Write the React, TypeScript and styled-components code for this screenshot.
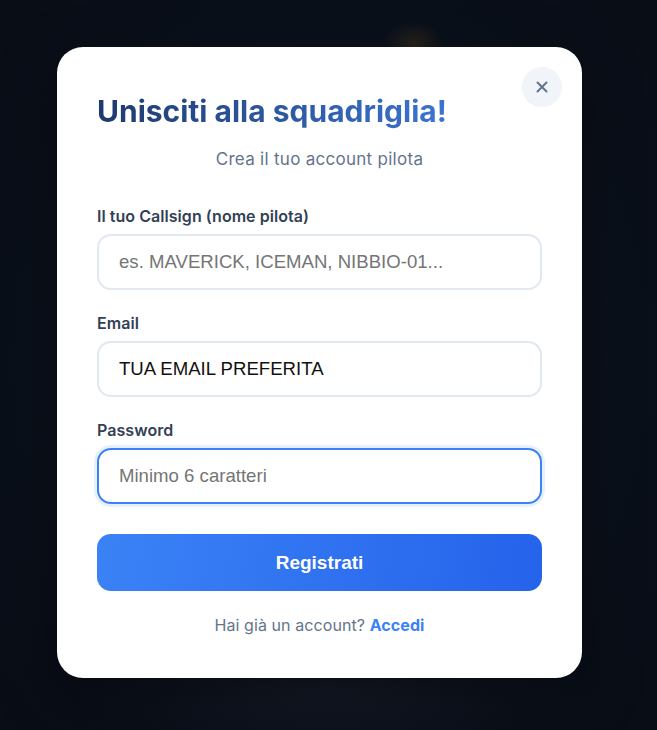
import React from "react";
import styled, { createGlobalStyle } from "styled-components";

const GlobalStyle = createGlobalStyle`
  html, body { margin: 0; padding: 0; }
  body {
    width: 657px;
    height: 730px;
    overflow: hidden;
    font-family: Inter, "Noto Sans", sans-serif;
    background:
      radial-gradient(ellipse 30px 22px at 414px 44px, rgba(140, 100, 30, 0.22), transparent 100%),
      radial-gradient(ellipse 260px 60px at 330px 690px, rgba(40, 48, 62, 0.3), transparent 100%),
      radial-gradient(ellipse 420px 500px at 330px 360px, #0f1623 0%, #0b111c 60%, #080d16 100%);
  }
`;

const Page = styled.div`
  display: flex;
  align-items: flex-start;
  padding: 47px 0 0 57px;
  box-sizing: border-box;
  height: 730px;
`;

const Modal = styled.div`
  position: relative;
  width: 525px;
  height: 631px;
  box-sizing: border-box;
  background: #ffffff;
  border-radius: 26px;
  padding: 46px 40px 40px;
  display: flex;
  flex-direction: column;
  box-shadow: 0 20px 60px rgba(0, 0, 0, 0.4);
`;

const CloseButton = styled.button`
  position: absolute;
  top: 20px;
  right: 20px;
  width: 40px;
  height: 40px;
  border-radius: 50%;
  border: none;
  background: #f1f5f9;
  color: #64748b;
  display: flex;
  align-items: center;
  justify-content: center;
  padding: 0;
  cursor: pointer;
`;

const Title = styled.h2`
  margin: 0;
  font-family: Inter, sans-serif;
  font-size: 30px;
  line-height: 36px;
  font-weight: 700;
  background: linear-gradient(90deg, #1e3a6e 0%, #3b74d0 100%);
  -webkit-background-clip: text;
  background-clip: text;
  color: transparent;
  align-self: flex-start;
`;

const Subtitle = styled.p`
  margin: 18px 0 0;
  text-align: center;
  font-size: 17px;
  line-height: 24px;
  letter-spacing: 0.28px;
  color: #64748b;
`;

const Form = styled.form`
  display: flex;
  flex-direction: column;
  margin-top: 35px;
`;

const Field = styled.div`
  display: flex;
  flex-direction: column;
  gap: 8px;
  margin-bottom: 23px;
`;

const Label = styled.label`
  font-size: 16px;
  line-height: 20px;
  font-weight: 600;
  letter-spacing: 0.05px;
  color: #334155;
`;

const Input = styled.input<{ $focused?: boolean }>`
  box-sizing: border-box;
  width: 100%;
  height: 56px;
  padding: 0 20px;
  border-radius: 14px;
  border: 2px solid ${(p) => (p.$focused ? "#3b82f6" : "#e2e8f0")};
  box-shadow: ${(p) => (p.$focused ? "0 0 0 3px rgba(59,130,246,0.12)" : "none")};
  font-family: "Liberation Sans", Arial, sans-serif;
  font-size: 18.6px;
  color: #111111;
  caret-color: #000000;
  outline: none;
  background: #ffffff;
  &::placeholder {
    color: #757575;
  }
`;

const SubmitButton = styled.button`
  margin-top: 7px;
  height: 57px;
  border: none;
  border-radius: 14px;
  background: linear-gradient(100deg, #3b82f6 0%, #2563eb 100%);
  color: #ffffff;
  font-family: "Liberation Sans", Arial, sans-serif;
  font-weight: 700;
  font-size: 19px;
  cursor: pointer;
`;

const Footer = styled.p`
  margin: 23px 0 0;
  text-align: center;
  font-size: 16px;
  line-height: 22px;
  letter-spacing: 0.08px;
  color: #64748b;
`;

const FooterLink = styled.a`
  color: #3b82f6;
  font-weight: 700;
  text-decoration: none;
`;

export default function App() {
  return (
    <>
      <GlobalStyle />
      <Page>
        <Modal>
          <CloseButton type="button" aria-label="Chiudi">
            <svg width="14" height="14" viewBox="0 0 14 14" fill="none">
              <path d="M2.5 2.5 L11.5 11.5 M11.5 2.5 L2.5 11.5" stroke="#64748b" strokeWidth="2" strokeLinecap="round" />
            </svg>
          </CloseButton>
          <Title>Unisciti alla squadriglia!</Title>
          <Subtitle>Crea il tuo account pilota</Subtitle>
          <Form onSubmit={(e) => e.preventDefault()}>
            <Field>
              <Label>Il tuo Callsign (nome pilota)</Label>
              <Input placeholder="es. MAVERICK, ICEMAN, NIBBIO-01..." />
            </Field>
            <Field>
              <Label>Email</Label>
              <Input defaultValue="TUA EMAIL PREFERITA" />
            </Field>
            <Field>
              <Label>Password</Label>
              <Input type="password" $focused autoFocus placeholder="Minimo 6 caratteri" />
            </Field>
            <SubmitButton type="submit">Registrati</SubmitButton>
          </Form>
          <Footer>
            Hai già un account? <FooterLink href="#">Accedi</FooterLink>
          </Footer>
        </Modal>
      </Page>
    </>
  );
}
